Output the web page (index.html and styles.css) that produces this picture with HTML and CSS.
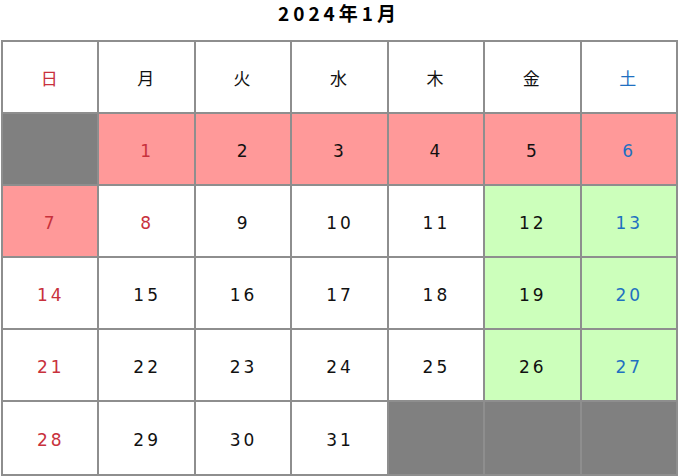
FILE: index.html
```html
<!DOCTYPE html>
<html lang="ja">
<head>
<meta charset="utf-8">
<link rel="stylesheet" href="styles.css">
</head>
<body>
<h1 class="title">2024年1月</h1>
<table class="cal">
<thead>
<tr><th class="sun">日</th><th>月</th><th>火</th><th>水</th><th>木</th><th>金</th><th class="sat">土</th></tr>
</thead>
<tbody>
<tr><td class="empty"></td><td class="hol sun">1</td><td class="hol">2</td><td class="hol">3</td><td class="hol">4</td><td class="hol">5</td><td class="hol sat">6</td></tr>
<tr><td class="hol sun">7</td><td class="sun">8</td><td>9</td><td>10</td><td>11</td><td class="grn">12</td><td class="grn sat">13</td></tr>
<tr><td class="sun">14</td><td>15</td><td>16</td><td>17</td><td>18</td><td class="grn">19</td><td class="grn sat">20</td></tr>
<tr><td class="sun">21</td><td>22</td><td>23</td><td>24</td><td>25</td><td class="grn">26</td><td class="grn sat">27</td></tr>
<tr class="last"><td class="sun">28</td><td>29</td><td>30</td><td>31</td><td class="empty"></td><td class="empty"></td><td class="empty"></td></tr>
</tbody>
</table>
</body>
</html>
```
FILE: styles.css
```css
html, body {
  margin: 0;
  padding: 0;
  background: #ffffff;
  font-family: "Noto Sans CJK JP", "DejaVu Sans", sans-serif;
}
.title {
  margin: 0;
  line-height: 26px;
  padding-bottom: 2px;
  font-size: 19px;
  font-weight: bold;
  text-align: center;
  letter-spacing: 4px;
  color: #000;
}
.cal {
  margin: 12px 0 0 1px;
  width: 677px;
  border-collapse: collapse;
  table-layout: fixed;
}
.cal tr {
  height: 72px;
}
.cal tr.last {
  height: 74px;
}
.cal th, .cal td {
  border: 2px solid #8e8e8e;
  text-align: center;
  vertical-align: middle;
  font-size: 17px;
  font-weight: normal;
  letter-spacing: 3px;
  padding: 3px 0 0 1px;
  color: #111;
  font-family: "DejaVu Sans", "Noto Sans CJK JP", sans-serif;
}
.cal th {
  font-family: "Noto Sans CJK JP", sans-serif;
  font-size: 17px;
  padding-top: 0;
}
.cal .sun { color: #c8313c; }
.cal .sat { color: #1f70c1; }
.cal .hol { background: #ff9999; }
.cal .grn { background: #ccffbb; }
.cal .empty { background: #808080; }
```
